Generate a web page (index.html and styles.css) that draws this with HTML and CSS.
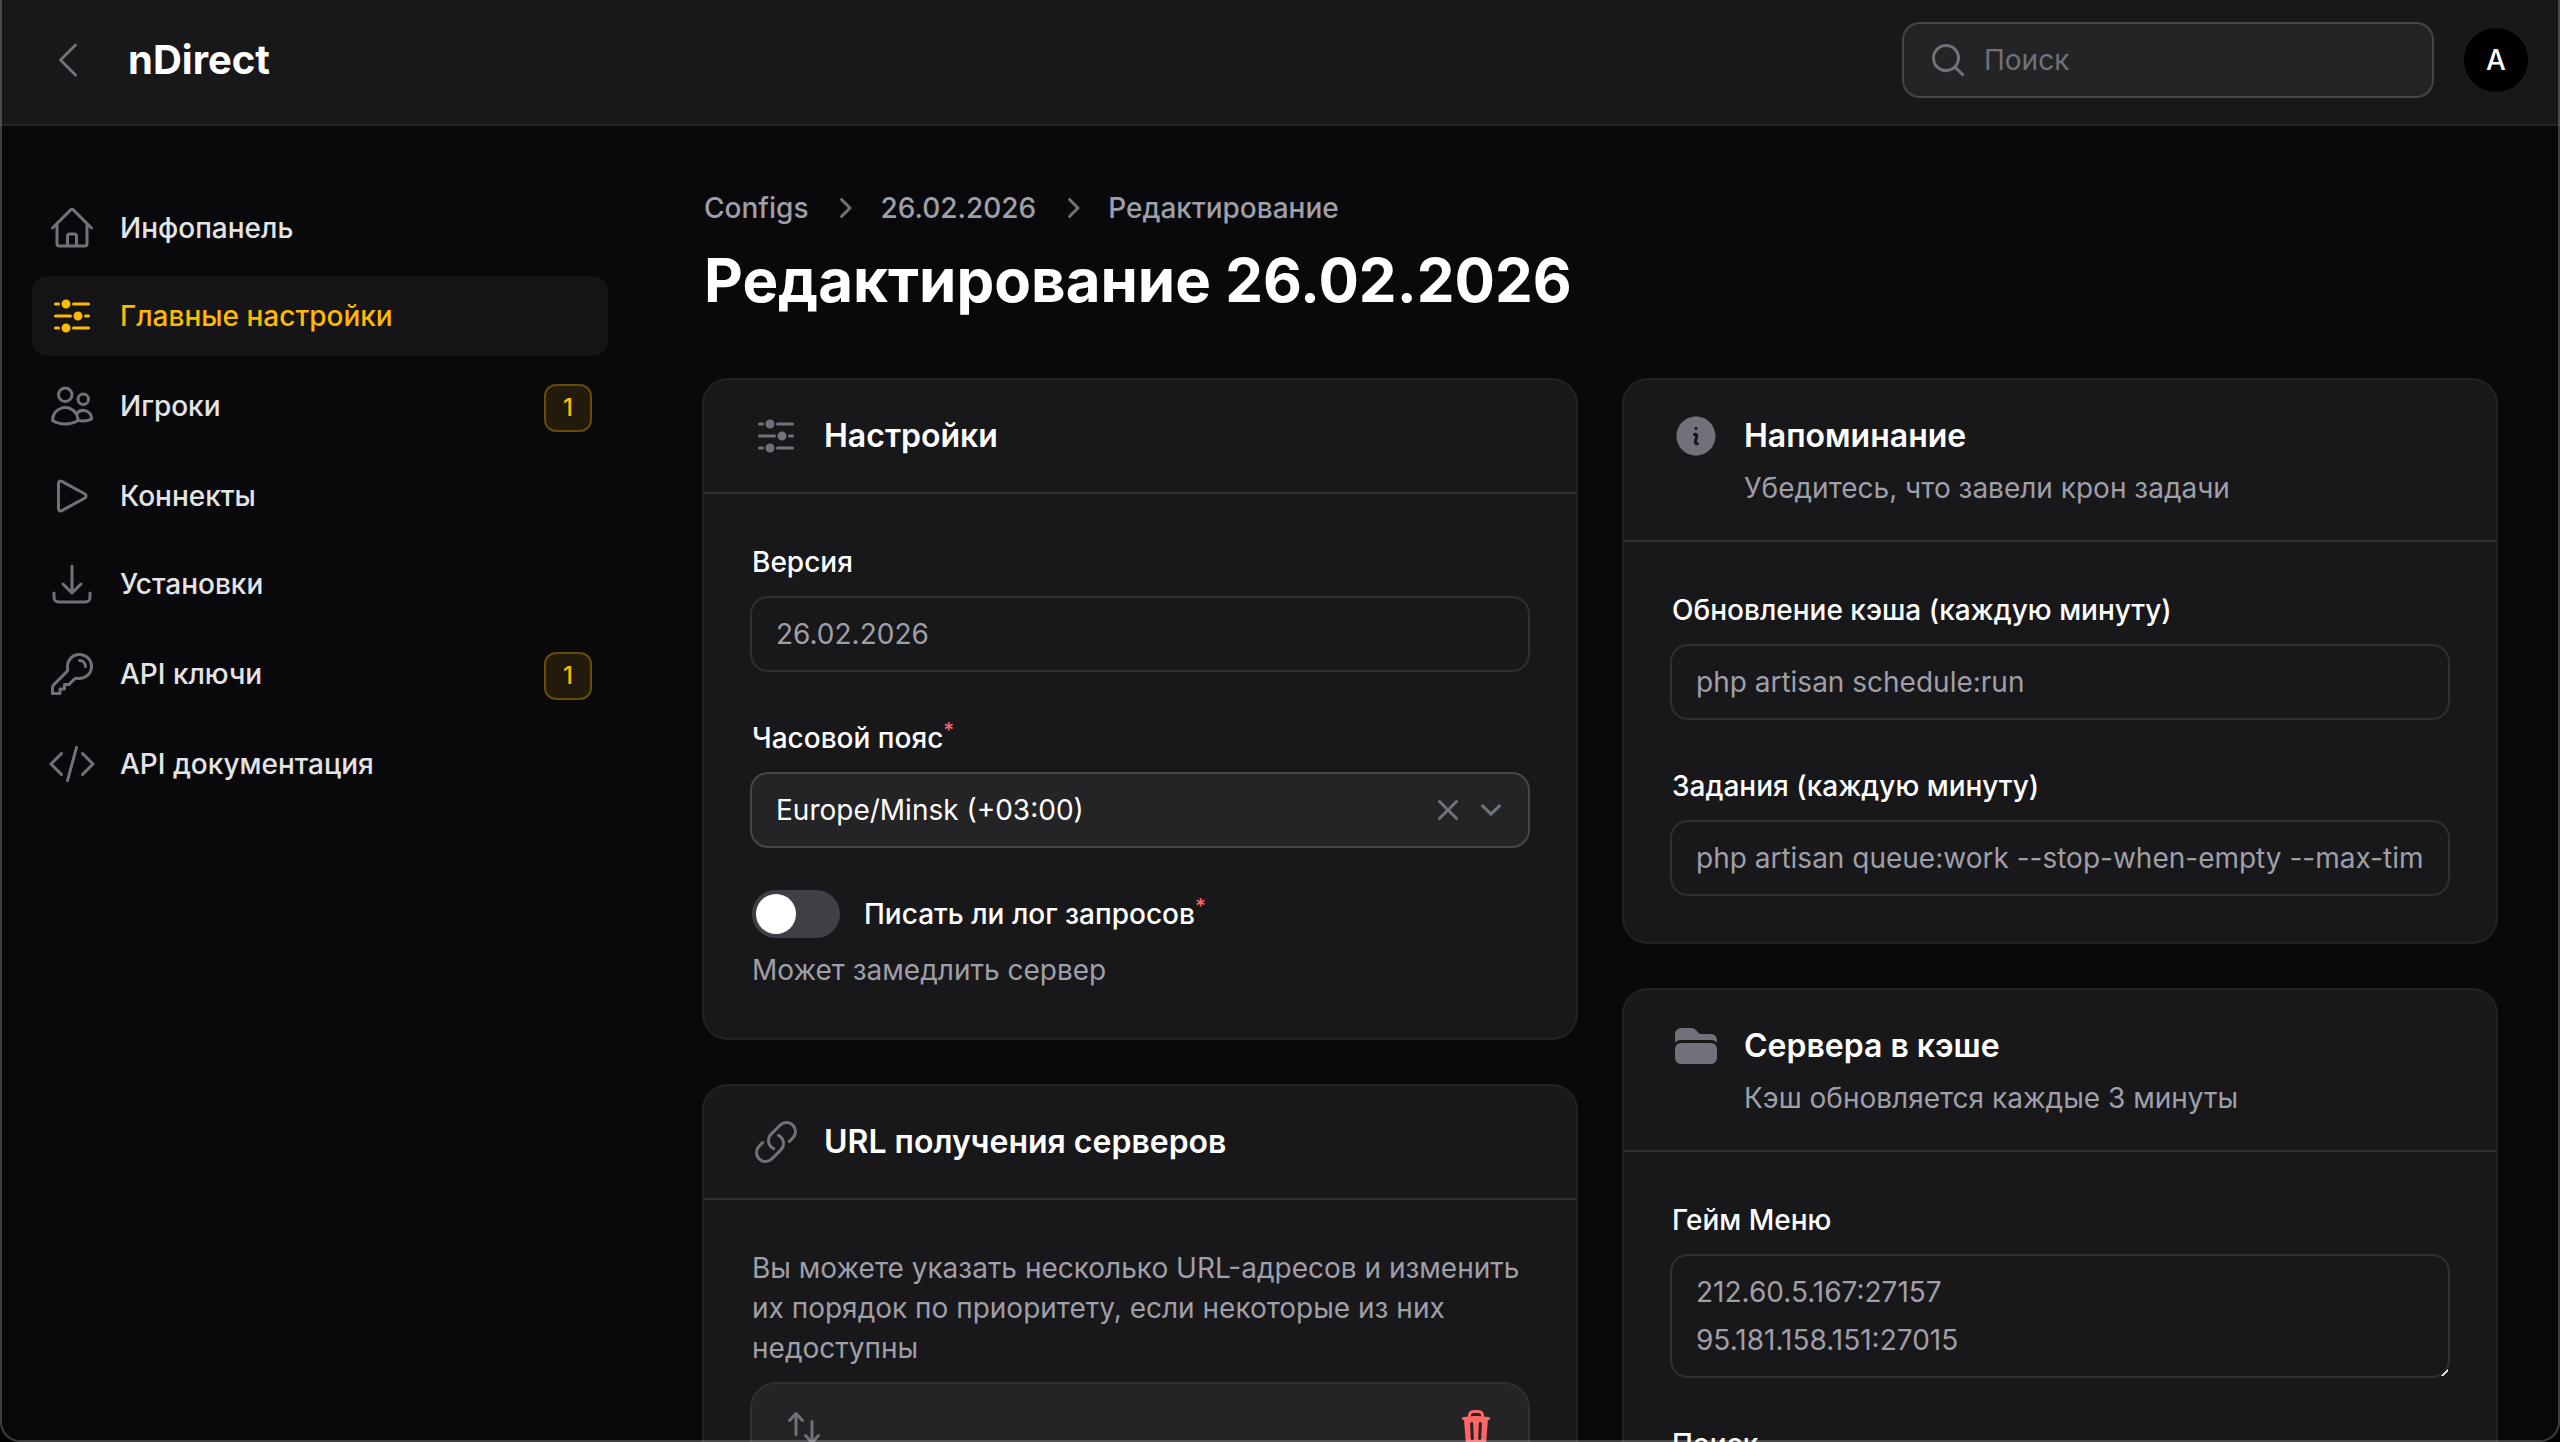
FILE: index.html
```html
<!DOCTYPE html>
<html lang="ru">
<head>
    <meta charset="UTF-8">
    <meta name="viewport" content="width=device-width, initial-scale=1.0">
    <title>Редактирование 26.02.2026 - nDirect</title>
    <link rel="stylesheet" href="styles.css">
</head>

<body>

    <header class="topbar">
        <button type="button" class="icon-btn" aria-label="Свернуть меню">
            <svg class="icon line" viewBox="0 0 24 24"><path d="M15.75 19.5 8.25 12l7.5-7.5"/></svg>
        </button>
        <a href="#" class="brand">nDirect</a>
        <div class="search field-box">
            <svg class="icon-sm solid" viewBox="0 0 20 20"><path fill-rule="evenodd" d="M9 3.5a5.5 5.5 0 1 0 0 11 5.5 5.5 0 0 0 0-11ZM2 9a7 7 0 1 1 12.452 4.391l3.328 3.329a.75.75 0 1 1-1.06 1.06l-3.329-3.328A7 7 0 0 1 2 9Z"/></svg>
            <input type="search" placeholder="Поиск" aria-label="Поиск">
        </div>
        <button type="button" class="avatar">A</button>
    </header>

    <div class="layout">

        <nav class="sidebar">
            <a href="#" class="nav-item">
                <svg class="icon line" viewBox="0 0 24 24"><path d="m2.25 12 8.954-8.955c.44-.439 1.152-.439 1.591 0L21.75 12M4.5 9.75v10.125c0 .621.504 1.125 1.125 1.125H9.75v-4.875c0-.621.504-1.125 1.125-1.125h2.25c.621 0 1.125.504 1.125 1.125V21h4.125c.621 0 1.125-.504 1.125-1.125V9.75M8.25 21h8.25"/></svg>
                <span class="nav-label">Инфопанель</span>
            </a>
            <a href="#" class="nav-item active">
                <svg class="icon solid" viewBox="0 0 24 24"><path d="M18.75 12.75h1.5a.75.75 0 0 0 0-1.5h-1.5a.75.75 0 0 0 0 1.5ZM12 6a.75.75 0 0 1 .75-.75h7.5a.75.75 0 0 1 0 1.5h-7.5A.75.75 0 0 1 12 6ZM12 18a.75.75 0 0 1 .75-.75h7.5a.75.75 0 0 1 0 1.5h-7.5A.75.75 0 0 1 12 18ZM3.75 6.75h1.5a.75.75 0 1 0 0-1.5h-1.5a.75.75 0 0 0 0 1.5ZM5.25 18.75h-1.5a.75.75 0 0 1 0-1.5h1.5a.75.75 0 0 1 0 1.5ZM3 12a.75.75 0 0 1 .75-.75h7.5a.75.75 0 0 1 0 1.5h-7.5A.75.75 0 0 1 3 12ZM9 3.75a2.25 2.25 0 1 0 0 4.5 2.25 2.25 0 0 0 0-4.5ZM12.75 12a2.25 2.25 0 1 1 4.5 0 2.25 2.25 0 0 1-4.5 0ZM9 15.75a2.25 2.25 0 1 0 0 4.5 2.25 2.25 0 0 0 0-4.5Z"/></svg>
                <span class="nav-label">Главные настройки</span>
            </a>
            <a href="#" class="nav-item">
                <svg class="icon line" viewBox="0 0 24 24"><path d="M15 19.128a9.38 9.38 0 0 0 2.625.372 9.337 9.337 0 0 0 4.121-.952 4.125 4.125 0 0 0-7.533-2.493M15 19.128v-.003c0-1.113-.285-2.16-.786-3.07M15 19.128v.106A12.318 12.318 0 0 1 8.624 21c-2.331 0-4.512-.645-6.374-1.766l-.001-.109a6.375 6.375 0 0 1 11.964-3.07M12 6.375a3.375 3.375 0 1 1-6.75 0 3.375 3.375 0 0 1 6.75 0Zm8.25 2.25a2.625 2.625 0 1 1-5.25 0 2.625 2.625 0 0 1 5.25 0Z"/></svg>
                <span class="nav-label">Игроки</span>
                <span class="badge">1</span>
            </a>
            <a href="#" class="nav-item">
                <svg class="icon line" viewBox="0 0 24 24"><path d="M5.25 5.653c0-.856.917-1.398 1.667-.986l11.54 6.347a1.125 1.125 0 0 1 0 1.972l-11.54 6.347a1.125 1.125 0 0 1-1.667-.986V5.653Z"/></svg>
                <span class="nav-label">Коннекты</span>
            </a>
            <a href="#" class="nav-item">
                <svg class="icon line" viewBox="0 0 24 24"><path d="M3 16.5v2.25A2.25 2.25 0 0 0 5.25 21h13.5A2.25 2.25 0 0 0 21 18.75V16.5M16.5 12 12 16.5m0 0L7.5 12m4.5 4.5V3"/></svg>
                <span class="nav-label">Установки</span>
            </a>
            <a href="#" class="nav-item">
                <svg class="icon line" viewBox="0 0 24 24"><path d="M15.75 5.25a3 3 0 0 1 3 3m3 0a6 6 0 0 1-7.029 5.912c-.563-.097-1.159.026-1.563.43L10.5 17.25H8.25v2.25H6v2.25H2.25v-2.818c0-.597.237-1.17.659-1.591l6.499-6.499c.404-.404.527-1 .43-1.563A6 6 0 1 1 21.75 8.25Z"/></svg>
                <span class="nav-label">API ключи</span>
                <span class="badge">1</span>
            </a>
            <a href="#" class="nav-item">
                <svg class="icon line" viewBox="0 0 24 24"><path d="M17.25 6.75 22.5 12l-5.25 5.25m-10.5 0L1.5 12l5.25-5.25m7.5-3-4.5 16.5"/></svg>
                <span class="nav-label">API документация</span>
            </a>
        </nav>

        <main class="content">
            <nav class="breadcrumbs">
                <a href="#">Configs</a>
                <svg class="icon-sm solid" viewBox="0 0 20 20"><path d="M8.22 5.22a.75.75 0 0 1 1.06 0l4.25 4.25a.75.75 0 0 1 0 1.06l-4.25 4.25a.75.75 0 0 1-1.06-1.06L11.94 10 8.22 6.28a.75.75 0 0 1 0-1.06Z"/></svg>
                <a href="#">26.02.2026</a>
                <svg class="icon-sm solid" viewBox="0 0 20 20"><path d="M8.22 5.22a.75.75 0 0 1 1.06 0l4.25 4.25a.75.75 0 0 1 0 1.06l-4.25 4.25a.75.75 0 0 1-1.06-1.06L11.94 10 8.22 6.28a.75.75 0 0 1 0-1.06Z"/></svg>
                <span>Редактирование</span>
            </nav>
            <h1>Редактирование 26.02.2026</h1>

            <form class="columns">

                <div class="column">
                    <section class="card">
                        <div class="card-header">
                            <svg class="icon solid" viewBox="0 0 24 24"><path d="M18.75 12.75h1.5a.75.75 0 0 0 0-1.5h-1.5a.75.75 0 0 0 0 1.5ZM12 6a.75.75 0 0 1 .75-.75h7.5a.75.75 0 0 1 0 1.5h-7.5A.75.75 0 0 1 12 6ZM12 18a.75.75 0 0 1 .75-.75h7.5a.75.75 0 0 1 0 1.5h-7.5A.75.75 0 0 1 12 18ZM3.75 6.75h1.5a.75.75 0 1 0 0-1.5h-1.5a.75.75 0 0 0 0 1.5ZM5.25 18.75h-1.5a.75.75 0 0 1 0-1.5h1.5a.75.75 0 0 1 0 1.5ZM3 12a.75.75 0 0 1 .75-.75h7.5a.75.75 0 0 1 0 1.5h-7.5A.75.75 0 0 1 3 12ZM9 3.75a2.25 2.25 0 1 0 0 4.5 2.25 2.25 0 0 0 0-4.5ZM12.75 12a2.25 2.25 0 1 1 4.5 0 2.25 2.25 0 0 1-4.5 0ZM9 15.75a2.25 2.25 0 1 0 0 4.5 2.25 2.25 0 0 0 0-4.5Z"/></svg>
                            <h2>Настройки</h2>
                        </div>
                        <div class="card-body">
                            <div class="field">
                                <label for="version">Версия</label>
                                <div class="field-box disabled">
                                    <input type="text" id="version" value="26.02.2026" disabled>
                                </div>
                            </div>
                            <div class="field">
                                <label for="timezone">Часовой пояс<sup>*</sup></label>
                                <div class="field-box">
                                    <select id="timezone" required>
                                        <option>Europe/Minsk (+03:00)</option>
                                    </select>
                                    <button type="button" class="clear-btn" aria-label="Очистить">
                                        <svg class="icon-sm solid" viewBox="0 0 20 20"><path d="M6.28 5.22a.75.75 0 0 0-1.06 1.06L8.94 10l-3.72 3.72a.75.75 0 1 0 1.06 1.06L10 11.06l3.72 3.72a.75.75 0 1 0 1.06-1.06L11.06 10l3.72-3.72a.75.75 0 0 0-1.06-1.06L10 8.94 6.28 5.22Z"/></svg>
                                    </button>
                                    <svg class="icon-sm line caret" viewBox="0 0 20 20"><path d="m6 8 4 4 4-4"/></svg>
                                </div>
                            </div>
                            <div class="field">
                                <div class="toggle-row">
                                    <input type="checkbox" id="log" class="toggle" role="switch">
                                    <label for="log">Писать ли лог запросов<sup>*</sup></label>
                                </div>
                                <p class="hint">Может замедлить сервер</p>
                            </div>
                        </div>
                    </section>

                    <section class="card">
                        <div class="card-header">
                            <svg class="icon line" viewBox="0 0 24 24"><path d="M13.19 8.688a4.5 4.5 0 0 1 1.242 7.244l-4.5 4.5a4.5 4.5 0 0 1-6.364-6.364l1.757-1.757m13.35-.622 1.757-1.757a4.5 4.5 0 0 0-6.364-6.364l-4.5 4.5a4.5 4.5 0 0 0 1.242 7.244"/></svg>
                            <h2>URL получения серверов</h2>
                        </div>
                        <div class="card-body">
                            <div class="field">
                                <p class="hint">Вы можете указать несколько URL-адресов и изменить их порядок по приоритету, если некоторые из них недоступны</p>
                                <div class="repeater-item">
                                    <button type="button" class="clear-btn" aria-label="Переместить">
                                        <svg class="icon-sm solid" viewBox="0 0 20 20"><path d="M2.24 6.8a.75.75 0 0 0 1.06-.04l1.95-2.1v8.59a.75.75 0 0 0 1.5 0V4.66l1.95 2.1a.75.75 0 1 0 1.1-1.02l-3.25-3.5a.75.75 0 0 0-1.1 0L2.2 5.74a.75.75 0 0 0 .04 1.06Zm8 6.4a.75.75 0 0 0-.04 1.06l3.25 3.5a.75.75 0 0 0 1.1 0l3.25-3.5a.75.75 0 1 0-1.1-1.02l-1.95 2.1V6.75a.75.75 0 0 0-1.5 0v8.59l-1.95-2.1a.75.75 0 0 0-1.06-.04Z"/></svg>
                                    </button>
                                    <button type="button" class="clear-btn danger" aria-label="Удалить">
                                        <svg class="icon-sm solid" viewBox="0 0 20 20"><path fill-rule="evenodd" d="M8.75 1A2.75 2.75 0 0 0 6 3.75v.443c-.795.077-1.584.176-2.365.298a.75.75 0 1 0 .23 1.482l.149-.022.841 10.518A2.75 2.75 0 0 0 7.596 19h4.807a2.75 2.75 0 0 0 2.742-2.53l.841-10.52.149.023a.75.75 0 0 0 .23-1.482A41.03 41.03 0 0 0 14 4.193V3.75A2.75 2.75 0 0 0 11.25 1h-2.5ZM10 4c.84 0 1.673.025 2.5.075V3.75c0-.69-.56-1.25-1.25-1.25h-2.5c-.69 0-1.25.56-1.25 1.25v.325C8.327 4.025 9.16 4 10 4ZM8.58 7.72a.75.75 0 0 0-1.5.06l.3 7.5a.75.75 0 1 0 1.5-.06l-.3-7.5Zm4.34.06a.75.75 0 1 0-1.5-.06l-.3 7.5a.75.75 0 1 0 1.5.06l.3-7.5Z"/></svg>
                                    </button>
                                </div>
                            </div>
                        </div>
                    </section>
                </div>

                <div class="column">
                    <section class="card">
                        <div class="card-header">
                            <svg class="icon solid" viewBox="0 0 24 24"><path fill-rule="evenodd" d="M2.25 12c0-5.385 4.365-9.75 9.75-9.75s9.75 4.365 9.75 9.75-4.365 9.75-9.75 9.75S2.25 17.385 2.25 12Zm8.706-1.442c1.146-.573 2.437.463 2.126 1.706l-.709 2.836.042-.02a.75.75 0 0 1 .67 1.34l-.04.022c-1.147.573-2.438-.463-2.127-1.706l.71-2.836-.042.02a.75.75 0 1 1-.671-1.34l.041-.022ZM12 9a.75.75 0 1 0 0-1.5.75.75 0 0 0 0 1.5Z"/></svg>
                            <div class="card-titles">
                                <h2>Напоминание</h2>
                                <p class="hint">Убедитесь, что завели крон задачи</p>
                            </div>
                        </div>
                        <div class="card-body">
                            <div class="field">
                                <label for="cron-cache">Обновление кэша (каждую минуту)</label>
                                <div class="field-box disabled">
                                    <input type="text" id="cron-cache" value="php artisan schedule:run" disabled>
                                </div>
                            </div>
                            <div class="field">
                                <label for="cron-jobs">Задания (каждую минуту)</label>
                                <div class="field-box disabled">
                                    <input type="text" id="cron-jobs" value="php artisan queue:work --stop-when-empty --max-time=60" disabled>
                                </div>
                            </div>
                        </div>
                    </section>

                    <section class="card">
                        <div class="card-header">
                            <svg class="icon solid" viewBox="0 0 24 24"><path d="M19.5 21a3 3 0 0 0 3-3v-4.5a3 3 0 0 0-3-3h-15a3 3 0 0 0-3 3V18a3 3 0 0 0 3 3h15ZM1.5 10.146V6a3 3 0 0 1 3-3h5.379a2.25 2.25 0 0 1 1.59.659l2.122 2.121c.14.141.331.22.53.22H19.5a3 3 0 0 1 3 3v1.146A4.483 4.483 0 0 0 19.5 9h-15a4.483 4.483 0 0 0-3 1.146Z"/></svg>
                            <div class="card-titles">
                                <h2>Сервера в кэше</h2>
                                <p class="hint">Кэш обновляется каждые 3 минуты</p>
                            </div>
                        </div>
                        <div class="card-body">
                            <div class="field">
                                <label for="game-menu">Гейм Меню</label>
                                <div class="field-box disabled">
                                    <textarea id="game-menu" rows="2" disabled>212.60.5.167:27157
95.181.158.151:27015</textarea>
                                </div>
                            </div>
                            <div class="field">
                                <label for="game-search">Поиск</label>
                                <div class="field-box disabled">
                                    <textarea id="game-search" rows="2" disabled></textarea>
                                </div>
                            </div>
                        </div>
                    </section>
                </div>

            </form>
        </main>
    </div>

    <div class="window-frame"></div>

</body>
</html>
```

FILE: styles.css
```css
* {
    box-sizing: border-box;
    margin: 0;
    padding: 0;
}

body {
    display: flex;
    flex-direction: column;
    height: 100vh;
    overflow: hidden;
    background-color: #09090b;
    color: white;
    font-family: Inter, sans-serif;
    font-size: 28px;
    line-height: 40px;
}

a {
    color: inherit;
    text-decoration: none;
}

button,
input,
select,
textarea {
    font: inherit;
    color: inherit;
    background: none;
    border: none;
    outline: none;
}

button {
    cursor: pointer;
}

.icon,
.icon-sm {
    flex: none;
    display: block;
    width: 48px;
    height: 48px;
    color: #71717b;
}

.icon-sm {
    width: 40px;
    height: 40px;
}

.line {
    fill: none;
    stroke: currentColor;
    stroke-width: 1.5;
    stroke-linecap: round;
    stroke-linejoin: round;
}

.solid {
    fill: currentColor;
}

/* top bar */
.topbar {
    display: flex;
    align-items: center;
    flex: none;
    padding: 22px 32px 26px 44px;
    background-color: #18181b;
    box-shadow: 0 2px 0 #222224;
    z-index: 1;
}

.brand {
    margin-left: 36px;
    margin-right: auto;
    font-size: 40px;
    font-weight: 700;
}

.search {
    width: 528px;
    margin: 2px 32px 2px 0;
    padding-left: 24px;
}

.search .icon-sm {
    margin-right: -8px;
}

.search input::placeholder {
    color: #71717b;
    opacity: 1;
}

.avatar {
    width: 64px;
    height: 64px;
    border-radius: 50%;
    background-color: #000;
    font-weight: 500;
}

/* sidebar */
.layout {
    display: flex;
    flex: 1;
    min-height: 0;
}

.sidebar {
    display: flex;
    flex-direction: column;
    gap: 8px;
    flex: none;
    width: 640px;
    padding: 64px 32px;
}

.nav-item {
    display: flex;
    align-items: center;
    gap: 24px;
    padding: 16px;
    border-radius: 16px;
    color: #e4e4e7;
    font-weight: 500;
}

.nav-label {
    flex: 1;
}

.nav-item.active {
    background-color: #151517;
}

.nav-item.active,
.nav-item.active .icon {
    color: #ffb900;
}

.badge {
    min-width: 48px;
    margin-top: 4px;
    border: 2px solid #664a05;
    border-radius: 12px;
    background-color: #221b0c;
    color: #ffb900;
    font-size: 24px;
    font-weight: 500;
    line-height: 44px;
    text-align: center;
}

/* page */
.content {
    flex: 1;
    min-width: 0;
    padding: 64px;
    overflow-y: auto;
    scrollbar-width: none;
}

.breadcrumbs {
    display: flex;
    gap: 16px;
    margin-bottom: 16px;
    color: #9f9fa9;
    font-weight: 500;
}

h1 {
    margin-bottom: 64px;
    font-size: 60px;
    font-weight: 700;
    line-height: 72px;
}

h2 {
    font-size: 32px;
    font-weight: 600;
    line-height: 48px;
}

.columns {
    display: grid;
    grid-template-columns: 1fr 1fr;
    gap: 48px;
    align-items: start;
}

.column {
    display: flex;
    flex-direction: column;
    gap: 48px;
    min-width: 0;
}

.card {
    border-radius: 24px;
    background-color: #18181b;
    box-shadow: 0 0 0 2px #222224;
}

.card-header {
    display: flex;
    gap: 24px;
    padding: 32px 48px;
}

.card-titles {
    display: flex;
    flex-direction: column;
    gap: 8px;
}

.card-body {
    display: flex;
    flex-direction: column;
    gap: 48px;
    padding: 48px;
    border-top: 2px solid #2f2f32;
}

.field {
    display: flex;
    flex-direction: column;
    gap: 16px;
}

label {
    font-weight: 500;
}

sup {
    color: #ff6467;
    font-size: 21px;
    line-height: 0;
}

.hint {
    color: #9f9fa9;
}

.field-box {
    display: flex;
    align-items: center;
    border-radius: 16px;
    background-color: #242427;
    box-shadow: 0 0 0 2px #464648;
}

.field-box.disabled {
    background-color: #18181b;
    box-shadow: 0 0 0 2px #2f2f32;
    color: #9f9fa9;
}

.field-box input,
.field-box select,
.field-box textarea {
    flex: 1;
    min-width: 0;
    padding: 12px 24px;
    line-height: 48px;
}

.field-box input,
.field-box select {
    height: 72px;
    appearance: none;
}

textarea {
    display: block;
    resize: vertical;
}

textarea::-webkit-scrollbar {
    width: 20px;
    height: 20px;
}

textarea::-webkit-resizer {
    background: linear-gradient(135deg, transparent 40%, #09090b 40% 46%, #d4d4d8 46% 54%, #09090b 54% 60%, transparent 60%) 5px 5px / 14px 14px no-repeat;
}

.clear-btn {
    flex: none;
}

.caret {
    width: 42px;
    height: 42px;
    margin: 0 16px 0 2px;
    color: #6b7280;
}

.toggle-row {
    display: flex;
    align-items: center;
    gap: 24px;
}

.toggle {
    flex: none;
    width: 88px;
    height: 48px;
    margin: -4px 0;
    padding: 4px;
    border-radius: 24px;
    background-color: #3f3f46;
    appearance: none;
    cursor: pointer;
}

.toggle::before {
    content: "";
    display: block;
    width: 40px;
    height: 40px;
    border-radius: 50%;
    background-color: white;
}

.toggle:checked {
    padding-left: 44px;
    background-color: #ffb900;
}

.repeater-item {
    display: flex;
    justify-content: space-between;
    padding: 24px 32px;
    border-radius: 24px;
    background-color: #242427;
    box-shadow: 0 0 0 2px #2f2f32;
}

.danger .icon-sm {
    color: #ff6467;
}

/* thin outline over the whole window */
.window-frame {
    position: fixed;
    inset: 0;
    z-index: 2;
    border: 2px solid rgba(255, 255, 255, 0.22);
    border-top: none;
    border-radius: 0 0 20px 20px;
    box-shadow: 0 0 0 20px #000;
    pointer-events: none;
}
```
